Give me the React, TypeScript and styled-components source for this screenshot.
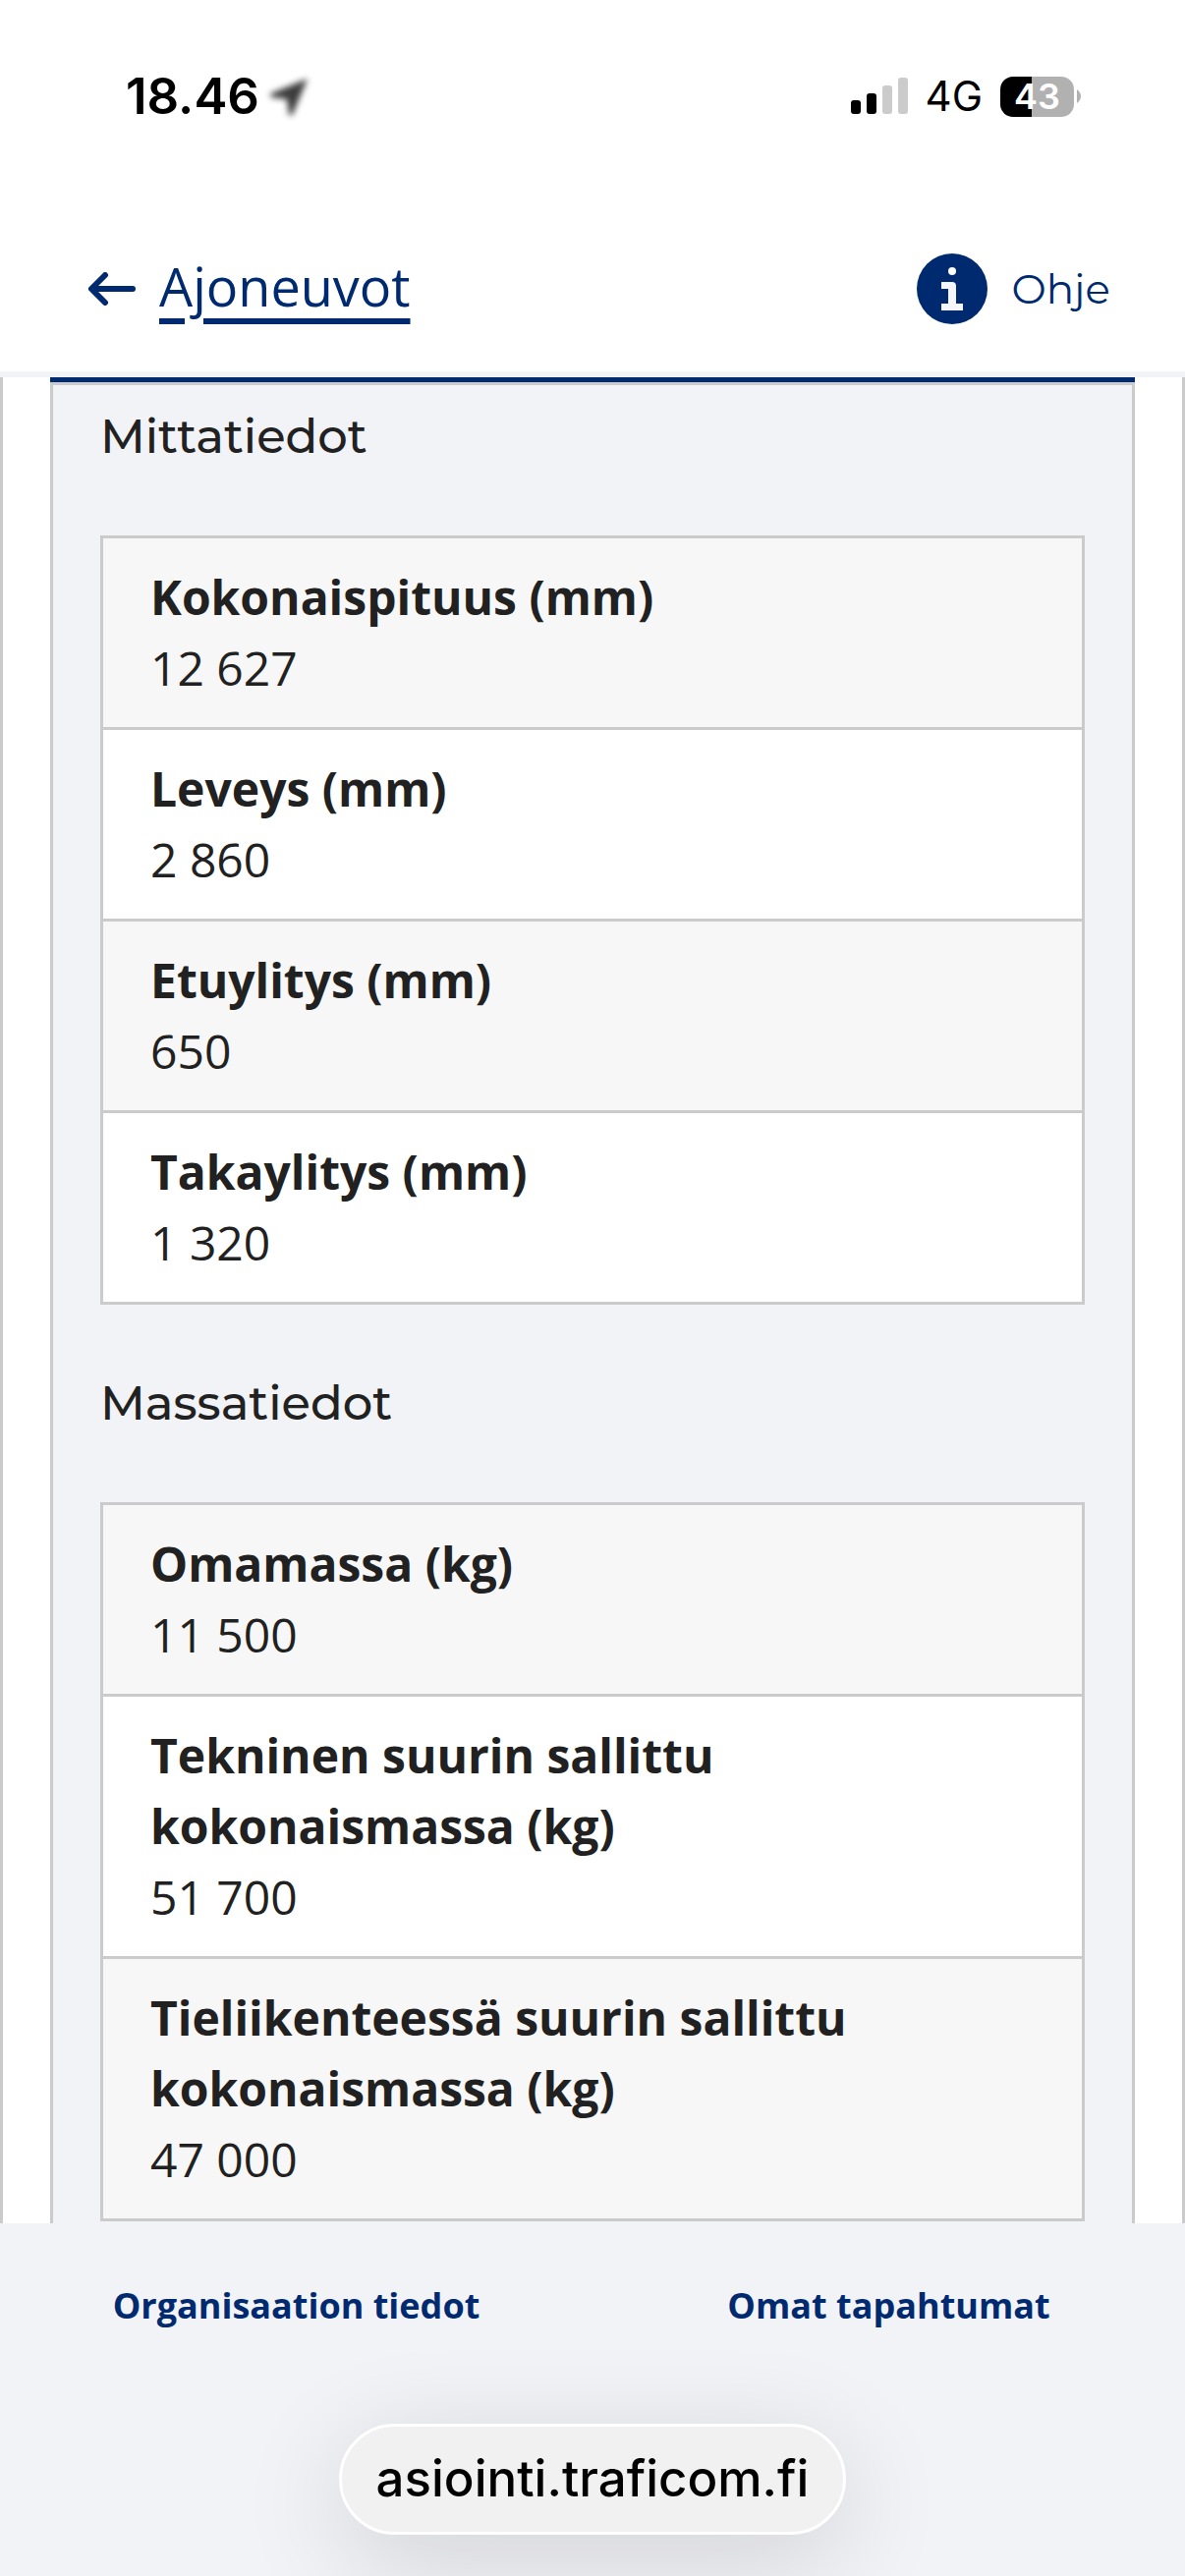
import React from "react";
import styled, { createGlobalStyle } from "styled-components";

const color = {
  navy: "#002a6f",
  text: "#212121",
  line: "#cbcbcb",
  surface: "#f2f3f7",
  stripe: "#f7f7f7",
};

const font = {
  body: '"Open Sans", "Noto Sans", sans-serif',
  heading: 'Montserrat, Inter, sans-serif',
  system: 'Inter, "Liberation Sans", sans-serif',
};

const GlobalStyle = createGlobalStyle`
  *, *::before, *::after { box-sizing: border-box; }
  body {
    margin: 0;
    background: ${color.surface};
    color: ${color.text};
    font-family: ${font.body};
    font-size: 48px;
    line-height: 72px;
  }
`;

const Page = styled.div`
  display: flex;
  flex-direction: column;
  min-height: 100vh;
  overflow: hidden;
`;

const StatusBar = styled.div`
  display: flex;
  justify-content: space-between;
  align-items: center;
  height: 196px;
  padding: 0 106px 0 128px;
  background: #fff;
  color: #000;
  font-family: ${font.system};
`;

const StatusGroup = styled.div<{ $gap: number }>`
  display: flex;
  align-items: center;
  gap: ${(p) => p.$gap}px;
`;

const Clock = styled.span`
  font-size: 51px;
  font-weight: 600;
`;

const LocationIcon = styled.svg`
  filter: blur(3px);
`;

const Network = styled.span`
  font-size: 42px;
  font-weight: 400;
`;

const Battery = styled.div`
  display: flex;
  align-items: center;
  gap: 3px;
`;

const BatteryBody = styled.span<{ $level: number }>`
  display: flex;
  align-items: center;
  justify-content: center;
  width: 75px;
  height: 41px;
  border-radius: 13px;
  background: linear-gradient(to right, #000 ${(p) => p.$level}%, #b1b1b1 ${(p) => p.$level}%);
  color: #fff;
  font-size: 36px;
  font-weight: 600;
`;

const Header = styled.header`
  display: flex;
  justify-content: space-between;
  align-items: center;
  height: 188px;
  padding: 14px 76px 0 90px;
  border-bottom: 6px solid ${color.surface};
  background: #fff;
`;

const BackLink = styled.a`
  display: flex;
  align-items: center;
  gap: 24px;
  color: ${color.navy};
  font-size: 54px;
  text-decoration: none;
`;

const BackText = styled.span`
  padding-bottom: 6px;
  text-decoration: underline;
  text-decoration-thickness: 6px;
  text-underline-offset: 12px;
`;

const HelpButton = styled.button`
  display: flex;
  align-items: center;
  gap: 24px;
  padding: 0;
  border: 0;
  background: none;
  color: ${color.navy};
  font-family: ${font.heading};
  font-size: 42px;
  font-weight: 400;
  line-height: 72px;
`;

const Content = styled.main`
  padding: 0 48px;
  border: solid ${color.line};
  border-width: 0 3px;
  background: #fff;
`;

const Panel = styled.div`
  border-top: 5px solid ${color.navy};
`;

const PanelBody = styled.div`
  display: flex;
  flex-direction: column;
  gap: 72px;
  padding: 24px 48px 2px;
  border: 3px solid ${color.line};
  border-bottom: 0;
  background: ${color.surface};
`;

const Section = styled.section`
  display: flex;
  flex-direction: column;
  gap: 72px;
`;

const SectionTitle = styled.h2`
  margin: 0;
  font-family: ${font.heading};
  font-size: 48px;
  font-weight: 500;
  line-height: 57px;
`;

const DataList = styled.dl`
  margin: 0;
  border: 3px solid ${color.line};
`;

const DataRow = styled.div`
  padding: 24px 48px;
  background: #fff;

  &:nth-child(odd) {
    background: ${color.stripe};
  }

  & + & {
    border-top: 3px solid ${color.line};
  }
`;

const Label = styled.dt`
  max-width: 780px;
  font-weight: 700;
`;

const Value = styled.dd`
  margin: 0;
`;

const Footer = styled.footer`
  display: flex;
  flex-direction: column;
  flex: 1;
  align-items: center;
  gap: 84px;
  padding: 48px 0 42px;
  background: ${color.surface};
`;

const FooterNav = styled.nav`
  display: grid;
  grid-template-columns: 1fr 1fr;
  width: 100%;
  justify-items: center;
`;

const FooterLink = styled.a`
  color: ${color.navy};
  font-size: 36px;
  font-weight: 700;
  text-decoration: none;
`;

const AddressButton = styled.button`
  padding: 17px 35px 18px;
  border: 3px solid #fff;
  border-radius: 57px;
  background: #f1f1f1;
  box-shadow: 0 24px 110px rgba(0, 0, 0, 0.14);
  color: #000;
  font-family: ${font.system};
  font-size: 51px;
  font-weight: 500;
  line-height: 72px;
`;

const SignalIcon = () => (
  <svg width="58" height="38" viewBox="0 0 58 38" aria-hidden="true">
    <rect x="0" y="23" width="10" height="14" rx="3" />
    <rect x="16" y="16" width="10" height="21" rx="3" />
    <rect x="32" y="8" width="10" height="29" rx="3" fill="#cbcbcb" />
    <rect x="48" y="0" width="10" height="37" rx="3" fill="#cbcbcb" />
  </svg>
);

const ArrowLeft = () => (
  <svg width="48" height="34" viewBox="0 0 48 34" fill="none" stroke="currentColor" strokeWidth="6" strokeLinecap="round" strokeLinejoin="round" aria-hidden="true">
    <path d="M45 17H4M17 3L3 17L17 31" />
  </svg>
);

const InfoIcon = () => (
  <svg width="72" height="72" viewBox="0 0 72 72" aria-hidden="true">
    <circle cx="36" cy="36" r="36" fill={color.navy} />
    <circle cx="36" cy="18" r="4" fill="#fff" />
    <path d="M25 29H36Q40 29 40 33V51H47V58H25V51H32V36H25Z" fill="#f4f6fa" />
  </svg>
);

const sections = [
  {
    title: "Mittatiedot",
    rows: [
      ["Kokonaispituus (mm)", "12 627"],
      ["Leveys (mm)", "2 860"],
      ["Etuylitys (mm)", "650"],
      ["Takaylitys (mm)", "1 320"],
    ],
  },
  {
    title: "Massatiedot",
    rows: [
      ["Omamassa (kg)", "11 500"],
      ["Tekninen suurin sallittu kokonaismassa (kg)", "51 700"],
      ["Tieliikenteessä suurin sallittu kokonaismassa (kg)", "47 000"],
    ],
  },
];

export default function App() {
  return (
    <Page>
      <GlobalStyle />
      <StatusBar>
        <StatusGroup $gap={9}>
          <Clock>18.46</Clock>
          <LocationIcon width="42" height="42" viewBox="0 0 42 42" aria-hidden="true">
            <path d="M40 3L3 18Q1 20 3 22L19 24L21 40Q23 42 25 39Z" fill="#3c3c3c" />
          </LocationIcon>
        </StatusGroup>
        <StatusGroup $gap={18}>
          <SignalIcon />
          <Network>4G</Network>
          <Battery>
            <BatteryBody $level={43}>43</BatteryBody>
            <svg width="4" height="14" viewBox="0 0 4 14" aria-hidden="true">
              <path d="M0 0Q4 3 4 7T0 14Z" fill="#b1b1b1" />
            </svg>
          </Battery>
        </StatusGroup>
      </StatusBar>
      <Header>
        <BackLink href="#ajoneuvot">
          <ArrowLeft />
          <BackText>Ajoneuvot</BackText>
        </BackLink>
        <HelpButton type="button">
          <InfoIcon />
          Ohje
        </HelpButton>
      </Header>
      <Content>
        <Panel>
          <PanelBody>
            {sections.map((section) => (
              <Section key={section.title}>
                <SectionTitle>{section.title}</SectionTitle>
                <DataList>
                  {section.rows.map(([label, value]) => (
                    <DataRow key={label}>
                      <Label>{label}</Label>
                      <Value>{value}</Value>
                    </DataRow>
                  ))}
                </DataList>
              </Section>
            ))}
          </PanelBody>
        </Panel>
      </Content>
      <Footer>
        <FooterNav>
          <FooterLink href="#organisaatio">Organisaation tiedot</FooterLink>
          <FooterLink href="#tapahtumat">Omat tapahtumat</FooterLink>
        </FooterNav>
        <AddressButton type="button">asiointi.traficom.fi</AddressButton>
      </Footer>
    </Page>
  );
}
